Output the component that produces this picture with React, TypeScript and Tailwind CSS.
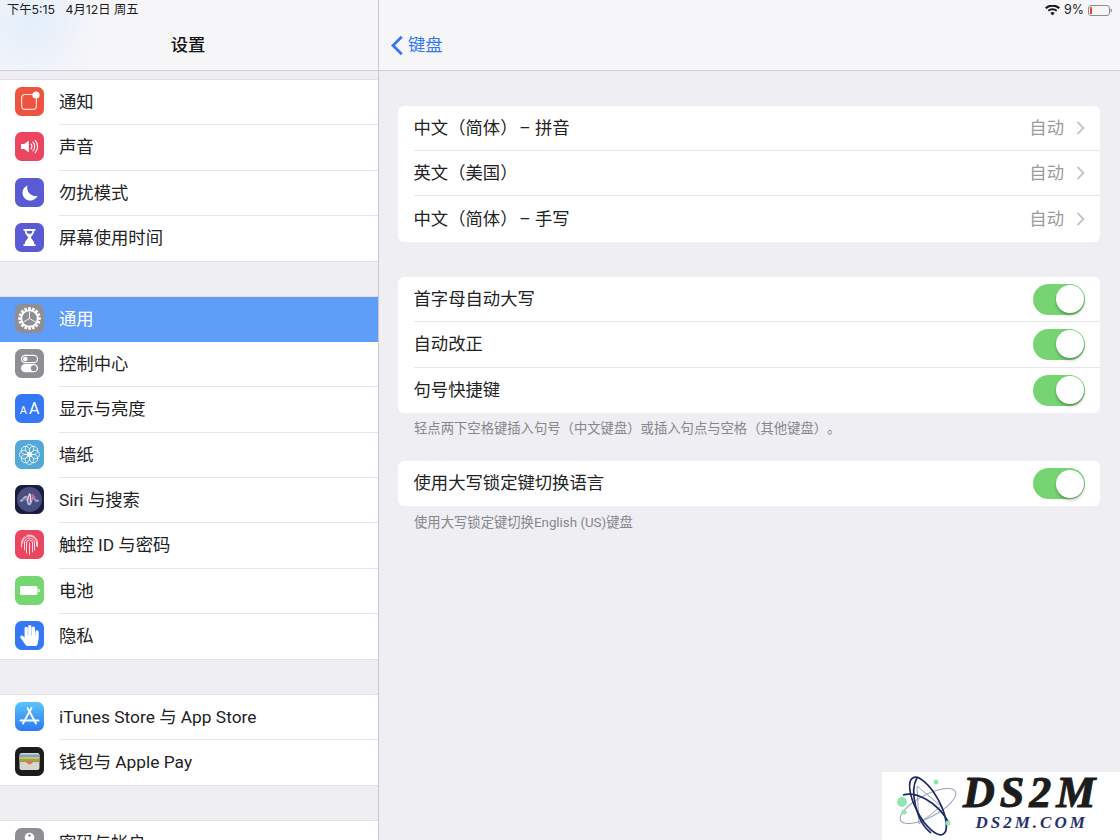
import React from "react";
import { FaHandPaper } from "react-icons/fa";

function IconBox({ className, children }: { className: string; children: React.ReactNode }) {
  return (
    <div className={`w-[29px] h-[29px] mb-[2px] shrink-0 rounded-[6.5px] flex items-center justify-center overflow-hidden ${className}`}>
      {children}
    </div>
  );
}

const Svg = ({ children }: { children: React.ReactNode }) => (
  <svg width="29" height="29" viewBox="0 0 29 29" fill="none">{children}</svg>
);

const gearTeeth = Array.from({ length: 16 }, (_, i) => (i * 360) / 16);

const icons: Record<string, React.ReactNode> = {
  notify: (
    <IconBox className="bg-[#ee5340]">
      <Svg>
        <path d="M18 7.5H10a3.4 3.4 0 0 0-3.4 3.4v8a3.4 3.4 0 0 0 3.4 3.4h8a3.4 3.4 0 0 0 3.4-3.4v-8" stroke="#fff" strokeOpacity=".8" strokeWidth="1.2" />
        <circle cx="21" cy="8" r="3.6" fill="#fff" />
      </Svg>
    </IconBox>
  ),
  sound: (
    <IconBox className="bg-[#ec4560]">
      <Svg>
        <path d="M6 12h3.2l4.6-3.6v12.2L9.200 17H6z" fill="#fff" />
        <path d="M16 12.200a3.400 3.400 0 0 1 0 4.600M18 10.200a6.200 6.200 0 0 1 0 8.600M20.200 8.400a9 9 0 0 1 0 12.200" stroke="#fff" strokeWidth="1.1" strokeLinecap="round" />
      </Svg>
    </IconBox>
  ),
  moon: (
    <IconBox className="bg-[#5a5bd4]">
      <Svg>
        <path d="M12.500 7.500a7.800 7.800 0 1 0 10 10.300 8.300 8.300 0 0 1-10-10.300z" fill="#fff" />
      </Svg>
    </IconBox>
  ),
  hourglass: (
    <IconBox className="bg-[#5a5bd4]">
      <Svg>
        <path d="M8.500 6h12v1.800h-1.300c0 3.600-2.800 5-3.300 6.700.5 1.700 3.300 3.100 3.300 6.700h1.300V23h-12v-1.800h1.300c0-3.600 2.800-5 3.300-6.700-.5-1.700-3.300-3.100-3.300-6.700H8.500z" fill="#fff" />
        <path d="M11.500 8h6c-.2 1.300-1 2.300-1.500 2.800h-3c-.5-.5-1.300-1.500-1.500-2.800z" fill="#5a5bd4" />
      </Svg>
    </IconBox>
  ),
  gear: (
    <IconBox className="bg-[#8e8e93]">
      <Svg>
        {gearTeeth.map((a) => (
          <rect key={a} x="13.200" y="3.200" width="2.600" height="3.200" fill="#fff" transform={`rotate(${a} 14.500 14.500)`} />
        ))}
        <circle cx="14.500" cy="14.500" r="8.200" stroke="#fff" strokeWidth="1.800" />
        <path d="M14.500 14.500V7.500M14.500 14.500l6.100 3.500M14.500 14.500l-6.100 3.500" stroke="#fff" strokeWidth=".9" />
      </Svg>
    </IconBox>
  ),
  control: (
    <IconBox className="bg-[#8e8e93]">
      <Svg>
        <rect x="6.500" y="6.300" width="16" height="7.400" rx="3.700" stroke="#fff" strokeWidth="1.200" />
        <circle cx="10.300" cy="10" r="2.300" fill="#fff" />
        <rect x="6" y="15" width="17" height="8.300" rx="4.150" fill="#fff" />
        <circle cx="18.800" cy="19.150" r="2.900" fill="#8e8e93" />
      </Svg>
    </IconBox>
  ),
  aa: (
    <IconBox className="bg-[#3478f6]">
      <span className="text-white font-normal leading-none flex items-baseline gap-[2px] pt-[1px] font-['Roboto',sans-serif]">
        <span className="text-[11px]">A</span>
        <span className="text-[16px]">A</span>
      </span>
    </IconBox>
  ),
  flower: (
    <IconBox className="bg-[#55a9d9]">
      <Svg>
        {[0, 45, 90, 135, 180, 225, 270, 315].map((a) => (
          <circle key={a} cx="14.500" cy="8.800" r="4.200" stroke="#fff" strokeOpacity=".85" strokeWidth=".9" transform={`rotate(${a} 14.500 14.500)`} />
        ))}
        <circle cx="14.500" cy="14.500" r="2.200" fill="#fff" fillOpacity=".9" />
      </Svg>
    </IconBox>
  ),
  siri: (
    <IconBox className="bg-[#1a1d3f]">
      <div className="w-[25px] h-[25px] rounded-full bg-[#4a4f80] flex items-center justify-center overflow-hidden">
        <Svg>
          <path d="M5 16c3-1 4-6 6-4s1 8 3.500 8S17 7 19 11s2 5 5 5" stroke="#7fd3e8" strokeWidth="2.500" strokeLinecap="round" />
          <path d="M7 15c2 0 3-3 5-2s1 5 3 4 2-9 3-8 2 5 4 6" stroke="#d65a9a" strokeWidth="2" strokeLinecap="round" />
          <path d="M12 15c1-1 2-8 3-7s0 9 1 9" stroke="#fff" strokeOpacity=".8" strokeWidth="1.500" strokeLinecap="round" />
        </Svg>
      </div>
    </IconBox>
  ),
  finger: (
    <IconBox className="bg-[#ec4560]">
      <Svg>
        <g stroke="#fff" strokeOpacity=".9" strokeWidth=".9" strokeLinecap="round">
          <path d="M7.500 13a7 7 0 0 1 14 0v3" />
          <path d="M6.500 17v-4a8 8 0 0 1 3-6.300M12 5.400a8 8 0 0 1 10.500 7.600v3.500" />
          <path d="M9.500 20v-7a5 5 0 0 1 10 0v7" />
          <path d="M11.500 23v-10a3 3 0 0 1 6 0v9" />
          <path d="M14.500 24.500V13" />
        </g>
      </Svg>
    </IconBox>
  ),
  battery: (
    <IconBox className="bg-[#76d672]">
      <Svg>
        <rect x="5" y="10" width="17.500" height="9" rx="1.500" fill="#fff" />
        <rect x="23.300" y="13" width="1.300" height="3" rx=".5" fill="#fff" />
      </Svg>
    </IconBox>
  ),
  hand: (
    <IconBox className="bg-[#3478f6]">
      <FaHandPaper className="text-white w-[19px] h-[21px]" />
    </IconBox>
  ),
  appstore: (
    <IconBox className="bg-linear-to-b from-[#5cc4fa] to-[#2f78f2]">
      <Svg>
        <path d="M12.500 6l8.500 15.500M16.500 6L8 21.500M5.500 18.500h18" stroke="#fff" strokeWidth="1.800" strokeLinecap="round" />
      </Svg>
    </IconBox>
  ),
  wallet: (
    <IconBox className="bg-[#1c1c1e]">
      <Svg>
        <rect x="4.500" y="6" width="20" height="17" rx="2" fill="#d8d6cc" />
        <rect x="4.500" y="7.500" width="20" height="2.500" fill="#6fa8d8" />
        <rect x="4.500" y="10" width="20" height="2" fill="#f0b840" />
        <rect x="4.500" y="12" width="20" height="2" fill="#74b85c" />
        <path d="M4.500 14h20v1h-6c-1 0-2 2.500-4 2.500s-3-2.500-4-2.500h-6z" fill="#e4705c" />
      </Svg>
    </IconBox>
  ),
  key: (
    <IconBox className="bg-[#8e8e93]">
      <Svg>
        <circle cx="14.500" cy="9.500" r="4.800" fill="#fff" />
        <circle cx="14.500" cy="7.500" r="1.300" fill="#8e8e93" />
        <path d="M12.800 13h3.400v9l-1.700 2-1.700-2z" fill="#fff" />
      </Svg>
    </IconBox>
  ),
};

type Item = { icon: string; label: string; selected?: boolean };

function Row({ item, last }: { item: Item; last: boolean }) {
  return (
    <div className={`h-[45.33px] pl-[15px] flex items-center ${item.selected ? "bg-[#5f9ef8]" : ""}`}>
      {icons[item.icon]}
      <div className={`ml-[15px] flex-1 h-full pt-[1.5px] flex items-center text-[17.33px] ${item.selected ? "text-white" : `text-[#222224] ${last ? "" : "border-b border-[#e6e6ea]"}`}`}>
        {item.label}
      </div>
    </div>
  );
}

function SideGroup({ items }: { items: Item[] }) {
  return (
    <div className="bg-white shadow-[0_0_0_1px_#dfdfe4] shrink-0">
      {items.map((it, i) => (
        <Row key={it.label} item={it} last={i === items.length - 1} />
      ))}
    </div>
  );
}

function Toggle() {
  return (
    <div className="w-[52px] h-[31px] rounded-full bg-[#76d572] flex items-center justify-end pr-[1.5px]">
      <div className="w-[28px] h-[28px] rounded-full bg-white shadow-[0_2px_3px_rgba(0,0,0,0.3)]" />
    </div>
  );
}

function Card({ children }: { children: React.ReactNode }) {
  return <div className="ml-[19px] mr-[20px] bg-white rounded-[6px] overflow-hidden">{children}</div>;
}

function LinkRow({ label, last }: { label: string; last?: boolean }) {
  return (
    <div className="h-[45.33px] pl-[15.5px]">
      <div className={`h-full flex items-center pr-[15px] text-[17.33px] text-[#222224] ${last ? "" : "border-b border-[#e6e6ea]"}`}>
        <span className="flex-1 whitespace-pre pt-[1.5px]">{label}</span>
        <span className="text-[#9b9b9f] mr-[12px] pt-[1.5px]">自动</span>
        <svg width="9" height="14" viewBox="0 0 9 14" fill="none">
          <path d="M1.500 1l6 6-6 6" stroke="#c4c4c8" strokeWidth="1.800" />
        </svg>
      </div>
    </div>
  );
}

function ToggleRow({ label, last }: { label: string; last?: boolean }) {
  return (
    <div className="h-[45.33px] pl-[15.5px]">
      <div className={`h-full flex items-center pr-[15px] text-[17.33px] text-[#222224] ${last ? "" : "border-b border-[#e6e6ea]"}`}>
        <span className="flex-1 pt-[1.5px]">{label}</span>
        <Toggle />
      </div>
    </div>
  );
}

export default function App() {
  return (
    <div className="relative w-[1120px] h-[840px] overflow-hidden flex bg-[#eeeef3] font-['Roboto','Noto_Sans_CJK_SC',sans-serif] antialiased [text-spacing-trim:space-all]">
      {/* Sidebar */}
      <div className="w-[379px] h-full shrink-0 border-r border-[#c8c8cc] flex flex-col">
        <div className="h-[71px] shrink-0 border-b border-[#cfcfd3] bg-[#f6f6f8] bg-[radial-gradient(circle_at_30px_22px,#e3eefb_0%,#f6f6f8_70px)]">
          <div className="h-[20px] pl-[7px] pt-[1px] flex items-center text-[12.3px] text-[#1c1c1e] whitespace-pre font-['Inter','Noto_Sans_CJK_SC',sans-serif]">
            下午5:15   4月12日 周五
          </div>
          <div className="h-[50px] pr-[2px] pt-[1px] flex items-center justify-center text-[17.33px] font-medium text-[#111]">设置</div>
        </div>
        <div className="flex-1 flex flex-col overflow-hidden pt-[9px] gap-[35.33px]">
          <SideGroup
            items={[
              { icon: "notify", label: "通知" },
              { icon: "sound", label: "声音" },
              { icon: "moon", label: "勿扰模式" },
              { icon: "hourglass", label: "屏幕使用时间" },
            ]}
          />
          <SideGroup
            items={[
              { icon: "gear", label: "通用", selected: true },
              { icon: "control", label: "控制中心" },
              { icon: "aa", label: "显示与亮度" },
              { icon: "flower", label: "墙纸" },
              { icon: "siri", label: "Siri 与搜索" },
              { icon: "finger", label: "触控 ID 与密码" },
              { icon: "battery", label: "电池" },
              { icon: "hand", label: "隐私" },
            ]}
          />
          <SideGroup
            items={[
              { icon: "appstore", label: "iTunes Store 与 App Store" },
              { icon: "wallet", label: "钱包与 Apple Pay" },
            ]}
          />
          <SideGroup items={[{ icon: "key", label: "密码与帐户" }]} />
        </div>
      </div>

      {/* Detail */}
      <div className="flex-1 h-full flex flex-col min-w-0">
        <div className="h-[71px] shrink-0 border-b border-[#cfcfd3] bg-[#f6f6f8]">
          <div className="h-[20px] pr-[8px] pt-[1px] flex items-center justify-end text-[12.5px] text-[#1c1c1e] font-['Inter',sans-serif]">
            <svg width="15" height="11" viewBox="0 0 15 11" className="mr-[4px]">
              <path d="M7.500 10.500L5.300 8.100a3.200 3.200 0 0 1 4.400 0zM3.900 6.600L2.600 5.100a7.200 7.200 0 0 1 9.800 0l-1.300 1.500a5.200 5.200 0 0 0-7.200 0zM1.500 4L0 2.500a10.900 10.900 0 0 1 15 0L13.500 4a8.900 8.900 0 0 0-12 0z" fill="#1c1c1e" />
            </svg>
            <span className="mr-[4px]">9%</span>
            <svg width="24" height="11" viewBox="0 0 24 11">
              <rect x=".5" y=".5" width="21" height="10" rx="2.500" fill="none" stroke="#8e8e93" />
              <rect x="2" y="2" width="2" height="7" rx=".5" fill="#ee4035" />
              <rect x="22.500" y="3.800" width="1.300" height="3.400" rx=".6" fill="#8e8e93" />
            </svg>
          </div>
          <div className="h-[50px] pl-[11px] pt-[1px] flex items-center text-[17.33px] text-[#3478f6]">
            <svg width="14" height="21" viewBox="0 0 14 21" fill="none" className="mr-[4px]">
              <path d="M11.800 1.800L3 10.500l8.800 8.700" stroke="#3478f6" strokeWidth="2.800" />
            </svg>
            键盘
          </div>
        </div>

        <div className="pt-[34.67px]">
          <Card>
            <LinkRow label={"中文（简体）\u200A– 拼音"} />
            <LinkRow label="英文（美国）" />
            <LinkRow label={"中文（简体）\u200A– 手写"} last />
          </Card>
          <div className="h-[35.33px]" />
          <Card>
            <ToggleRow label="首字母自动大写" />
            <ToggleRow label="自动改正" />
            <ToggleRow label="句号快捷键" last />
          </Card>
          <div className="pl-[35px] h-[48px] pt-[6.500px] text-[13.33px] leading-[19px] text-[#86868b]">
            轻点两下空格键插入句号（中文键盘）或插入句点与空格（其他键盘）。
          </div>
          <Card>
            <ToggleRow label="使用大写锁定键切换语言" last />
          </Card>
          <div className="pl-[35px] pt-[6.500px] text-[13.33px] leading-[19px] text-[#86868b]">
            使用大写锁定键切换English (US)键盘
          </div>
        </div>
      </div>

      {/* Watermark */}
      <div className="absolute right-0 bottom-0 w-[238px] h-[68px] bg-white flex items-center">
        <svg width="66" height="66" viewBox="0 0 66 66" fill="none" className="ml-[13px] shrink-0">
          <g stroke="#9aa0b8" strokeWidth="1">
            <ellipse cx="33" cy="33" rx="31" ry="11" transform="rotate(-28 33 33)" />
            <path d="M22 13l24 20-22 18z" />
          </g>
          <g stroke="#1d2a66" strokeWidth="1.700">
            <ellipse cx="33" cy="33" rx="32" ry="12" transform="rotate(62 33 33)" />
            <path d="M22 5C14 18 22 50 36 60" />
            <path d="M8 22c12-4 34 6 46 28" />
          </g>
          <circle cx="7" cy="29" r="5" fill="#8fe8b0" />
          <circle cx="9" cy="39" r="2.500" fill="#8fe8b0" />
          <circle cx="41" cy="9" r="2.500" fill="#8fe8b0" />
          <circle cx="53" cy="50" r="2.500" fill="#8fe8b0" />
        </svg>
        <div className="flex flex-col items-center ml-[2px] pb-[6px] font-['Liberation_Serif',serif] italic font-bold">
          <span className="text-[44px] leading-[40px] tracking-[5px] text-[#1c1c1c] [-webkit-text-stroke:1px_#1c1c1c]">DS2M</span>
          <span className="text-[17px] leading-[20px] tracking-[3px] text-[#27306e]">DS2M.COM</span>
        </div>
      </div>
    </div>
  );
}
